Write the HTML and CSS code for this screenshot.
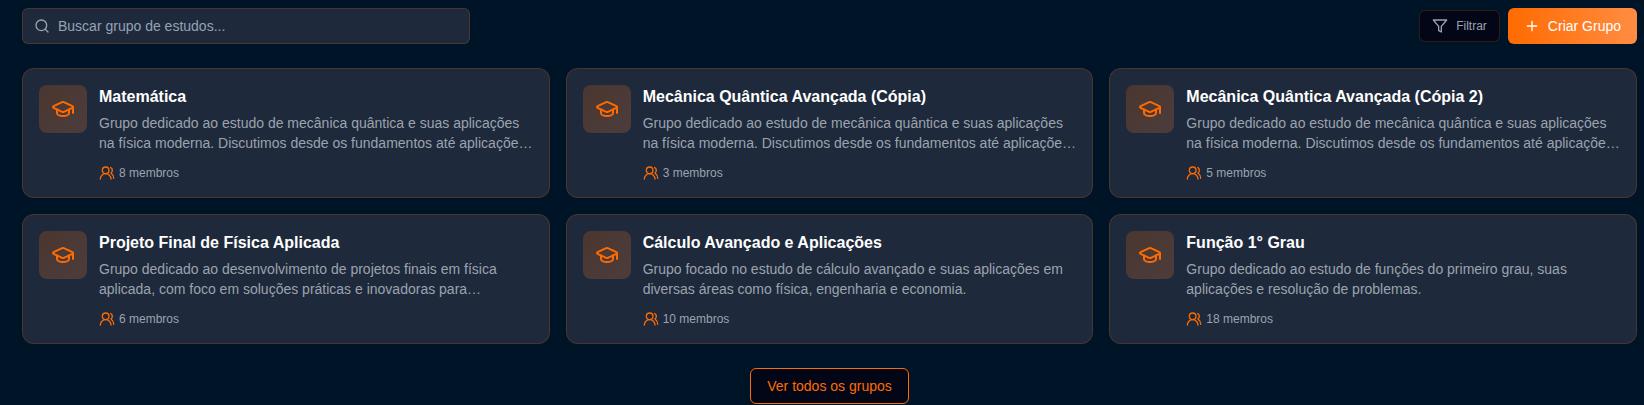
FILE: index.html
```html
<!DOCTYPE html>
<html lang="pt-BR">
<head>
<meta charset="utf-8">
<meta name="viewport" content="width=device-width, initial-scale=1">
<title>Grupos de estudo</title>
<link rel="stylesheet" href="styles.css">
</head>
<body>
<svg class="sprite" aria-hidden="true">
  <symbol id="cap" viewBox="0 0 24 24"><path d="M21.42 10.922a1 1 0 0 0-.019-1.838L12.83 5.18a2 2 0 0 0-1.66 0L2.6 9.08a1 1 0 0 0 0 1.832l8.57 3.908a2 2 0 0 0 1.66 0z"/><path d="M22 10v6"/><path d="M6 12.5V16a6 3 0 0 0 12 0v-3.5"/></symbol>
  <symbol id="users" viewBox="0 0 24 24"><path d="M18 21a8 8 0 0 0-16 0"/><circle cx="10" cy="8" r="5"/><path d="M22 20c0-3.37-2-6.5-4-8a5 5 0 0 0-.45-8.3"/></symbol>
</svg>
<main class="groups">
  <header class="toolbar">
    <label class="search">
      <svg class="icon" viewBox="0 0 24 24" aria-hidden="true"><circle cx="11" cy="11" r="8"/><path d="m21 21-4.3-4.3"/></svg>
      <input class="search-input" type="text" aria-label="Buscar grupo de estudos" placeholder="Buscar grupo de estudos...">
    </label>
    <div class="actions">
      <button class="button filter" type="button">
        <svg class="icon" viewBox="0 0 24 24" aria-hidden="true"><path d="M22 3H2l8 9.46V19l4 2v-8.54L22 3z"/></svg>
        Filtrar
      </button>
      <button class="button create" type="button">
        <svg class="icon" viewBox="0 0 24 24" aria-hidden="true"><path d="M5 12h14M12 5v14"/></svg>
        Criar Grupo
      </button>
    </div>
  </header>

  <section class="grid">
    <article class="card">
      <div class="badge"><svg class="icon cap"><use href="#cap"/></svg></div>
      <div class="body">
        <h3 class="title">Matemática</h3>
        <p class="description">Grupo dedicado ao estudo de mecânica quântica e suas aplicações na física moderna. Discutimos desde os fundamentos até aplicaçõe…</p>
        <p class="members"><svg class="icon"><use href="#users"/></svg>8 membros</p>
      </div>
    </article>
    <article class="card">
      <div class="badge"><svg class="icon cap"><use href="#cap"/></svg></div>
      <div class="body">
        <h3 class="title">Mecânica Quântica Avançada (Cópia)</h3>
        <p class="description">Grupo dedicado ao estudo de mecânica quântica e suas aplicações na física moderna. Discutimos desde os fundamentos até aplicaçõe…</p>
        <p class="members"><svg class="icon"><use href="#users"/></svg>3 membros</p>
      </div>
    </article>
    <article class="card">
      <div class="badge"><svg class="icon cap"><use href="#cap"/></svg></div>
      <div class="body">
        <h3 class="title">Mecânica Quântica Avançada (Cópia 2)</h3>
        <p class="description">Grupo dedicado ao estudo de mecânica quântica e suas aplicações na física moderna. Discutimos desde os fundamentos até aplicaçõe…</p>
        <p class="members"><svg class="icon"><use href="#users"/></svg>5 membros</p>
      </div>
    </article>
    <article class="card">
      <div class="badge"><svg class="icon cap"><use href="#cap"/></svg></div>
      <div class="body">
        <h3 class="title">Projeto Final de Física Aplicada</h3>
        <p class="description">Grupo dedicado ao desenvolvimento de projetos finais em física aplicada, com foco em soluções práticas e inovadoras para…</p>
        <p class="members"><svg class="icon"><use href="#users"/></svg>6 membros</p>
      </div>
    </article>
    <article class="card">
      <div class="badge"><svg class="icon cap"><use href="#cap"/></svg></div>
      <div class="body">
        <h3 class="title">Cálculo Avançado e Aplicações</h3>
        <p class="description">Grupo focado no estudo de cálculo avançado e suas aplicações em diversas áreas como física, engenharia e economia.</p>
        <p class="members"><svg class="icon"><use href="#users"/></svg>10 membros</p>
      </div>
    </article>
    <article class="card">
      <div class="badge"><svg class="icon cap"><use href="#cap"/></svg></div>
      <div class="body">
        <h3 class="title">Função 1° Grau</h3>
        <p class="description">Grupo dedicado ao estudo de funções do primeiro grau, suas aplicações e resolução de problemas.</p>
        <p class="members"><svg class="icon"><use href="#users"/></svg>18 membros</p>
      </div>
    </article>
  </section>

  <footer class="more">
    <button class="button all" type="button">Ver todos os grupos</button>
  </footer>
</main>
</body>
</html>
```
FILE: styles.css
```css
:root {
  --page: #001427;
  --surface: #1e293b;
  --dark: #020617;
  --accent: #ff6b00;
  --line: rgba(255, 107, 0, 0.2);
  --muted: #9ca3af;
}

* {
  box-sizing: border-box;
  margin: 0;
}

body {
  background: var(--page);
  color: #fff;
  font: 14px/20px "Liberation Sans", Arial, sans-serif;
}

.sprite {
  display: none;
}

.icon {
  width: 16px;
  height: 16px;
  flex: none;
  fill: none;
  stroke: currentColor;
  stroke-width: 2;
  stroke-linecap: round;
  stroke-linejoin: round;
}

.groups {
  display: flex;
  flex-direction: column;
  gap: 24px;
  padding: 8px 7px 0 22px;
}

.toolbar {
  display: flex;
  align-items: center;
  justify-content: space-between;
  gap: 16px;
}

.search {
  display: flex;
  align-items: center;
  gap: 8px;
  flex: 1;
  max-width: 448px;
  height: 36px;
  padding: 0 11px;
  border: 1px solid var(--line);
  border-radius: 6px;
  background: var(--surface);
  color: var(--muted);
}

.search-input {
  flex: 1;
  min-width: 0;
  padding: 0;
  border: 0;
  outline: 0;
  background: none;
  color: #fff;
  font: inherit;
}

.search-input::placeholder {
  color: #94a3b8;
}

.actions {
  display: flex;
  align-items: center;
  gap: 8px;
}

.button {
  display: inline-flex;
  align-items: center;
  justify-content: center;
  gap: 8px;
  height: 36px;
  padding: 0 16px;
  border: 0;
  border-radius: 6px;
  font: inherit;
  white-space: nowrap;
  cursor: pointer;
}

.filter {
  height: 32px;
  padding: 0 12px;
  border: 1px solid var(--line);
  background: var(--dark);
  color: var(--muted);
  font-size: 12px;
}

.create {
  background: linear-gradient(to right, #ff6b00, #ff8c42);
  color: #fff;
}

.all {
  border: 1px solid var(--accent);
  background: var(--dark);
  color: var(--accent);
}

.grid {
  display: grid;
  grid-template-columns: repeat(3, minmax(0, 1fr));
  gap: 16px;
}

.card {
  display: flex;
  align-items: flex-start;
  gap: 12px;
  padding: 16px;
  border: 1px solid var(--line);
  border-radius: 12px;
  background: var(--surface);
}

.badge {
  display: grid;
  place-items: center;
  flex: none;
  width: 48px;
  height: 48px;
  border-radius: 8px;
  background: linear-gradient(to bottom right, rgba(255, 107, 0, 0.2), rgba(255, 140, 66, 0.2));
  color: var(--accent);
}

.cap {
  width: 24px;
  height: 24px;
}

.body {
  flex: 1;
  min-width: 0;
}

.title {
  margin-bottom: 4px;
  font-size: 16px;
  line-height: 24px;
}

.description {
  display: -webkit-box;
  overflow: hidden;
  margin-bottom: 12px;
  color: var(--muted);
  -webkit-box-orient: vertical;
  -webkit-line-clamp: 2;
}

.members {
  display: flex;
  align-items: center;
  gap: 4px;
  color: var(--muted);
  font-size: 12px;
  line-height: 16px;
}

.members .icon {
  color: var(--accent);
}

.more {
  display: flex;
  justify-content: center;
}
```
